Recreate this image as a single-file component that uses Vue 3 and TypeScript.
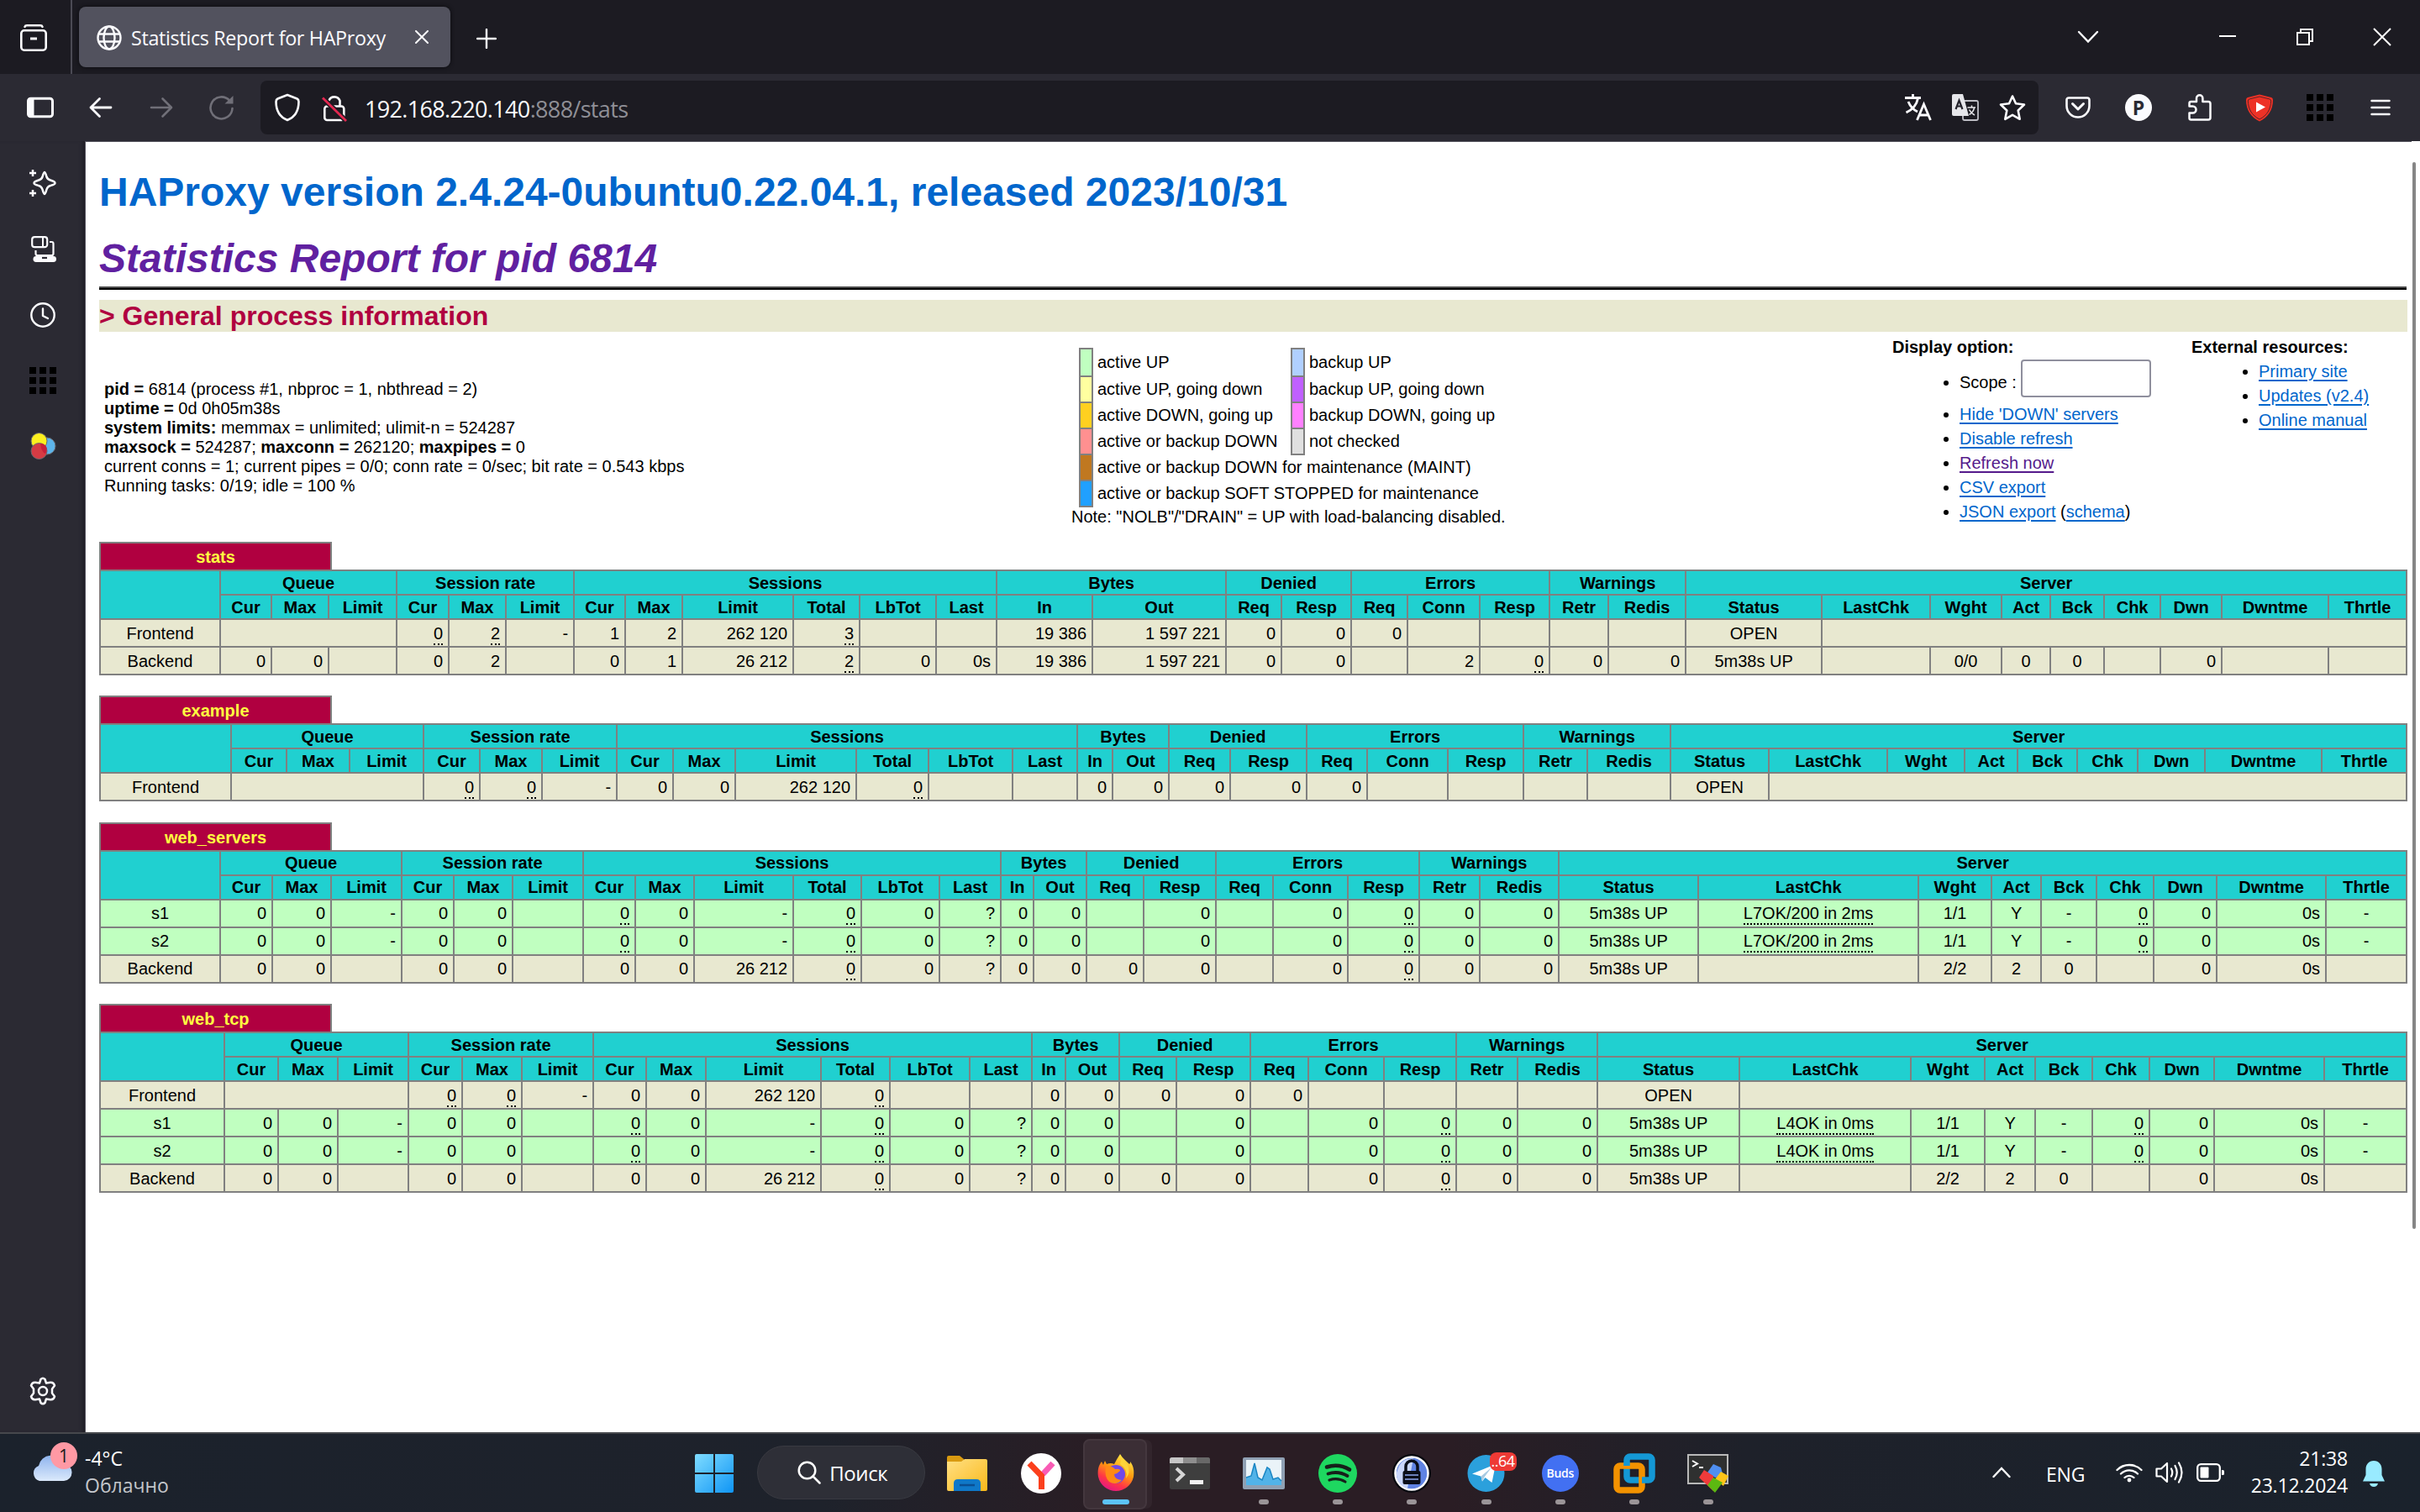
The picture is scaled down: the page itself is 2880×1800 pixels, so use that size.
<script setup lang="ts">
interface Cell {
  text: string
  span: number
  tip: boolean
  align: string
}
interface Row {
  kind: string
  cells: Cell[]
}
interface Proxy {
  name: string
  edges: number[]
  rows: Row[]
}

const groups: [string, number][] = [
  ['Queue', 3], ['Session rate', 3], ['Sessions', 6], ['Bytes', 2],
  ['Denied', 2], ['Errors', 3], ['Warnings', 2], ['Server', 9],
]
const heads = ('Cur|Max|Limit|Cur|Max|Limit|Cur|Max|Limit|Total|LbTot|Last|In|Out|Req|Resp|' +
  'Req|Conn|Resp|Retr|Redis|Status|LastChk|Wght|Act|Bck|Chk|Dwn|Dwntme|Thrtle').split('|')

// "~" marks a value with a tooltip, ":n" an empty cell over n columns
function row(kind: string, line: string): Row {
  let col = 0
  const cells = line.split('|').map((raw): Cell => {
    const span = raw.startsWith(':') ? Number(raw.slice(1)) : 1
    const centred = col === 0 || (col >= 22 && col <= 26) || col === 30
    col += span
    return {
      text: span > 1 ? '' : raw.replace('~', ''),
      span,
      tip: raw.startsWith('~'),
      align: centred ? 'ac' : 'ar',
    }
  })
  return { kind, cells }
}

const proxies: Proxy[] = [
  {
    name: 'stats',
    edges: [119, 262, 323, 391, 472, 534, 602, 683, 744, 812, 944, 1023, 1114, 1186, 1300, 1459, 1525, 1608, 1675, 1761, 1844, 1914, 2006, 2168, 2297, 2382, 2440, 2504, 2571, 2644, 2771, 2864],
    rows: [
      row('base', 'Frontend|:3|~0|~2|-|1|2|262 120|~3|||19 386|1 597 221|0|0|0|||||OPEN|:8'),
      row('base', 'Backend|0|0||0|2||0|1|26 212|~2|0|0s|19 386|1 597 221|0|0||2|~0|0|0|5m38s UP||0/0|0|0||0||'),
    ],
  },
  {
    name: 'example',
    edges: [119, 275, 341, 416, 504, 571, 645, 734, 801, 875, 1019, 1105, 1205, 1282, 1324, 1391, 1464, 1555, 1627, 1723, 1813, 1889, 1988, 2105, 2246, 2338, 2401, 2472, 2544, 2624, 2763, 2864],
    rows: [row('base', 'Frontend|:3|~0|~0|-|0|0|262 120|~0|||0|0|0|0|0|||||OPEN|:8')],
  },
  {
    name: 'web_servers',
    edges: [119, 262, 324, 394, 478, 540, 610, 694, 756, 826, 944, 1025, 1118, 1191, 1230, 1293, 1361, 1447, 1515, 1604, 1689, 1761, 1855, 2021, 2283, 2370, 2429, 2495, 2563, 2638, 2768, 2864],
    rows: [
      row('up', 's1|0|0|-|0|0||~0|0|-|~0|0|?|0|0||0||0|~0|0|0|5m38s UP|~L7OK/200 in 2ms|1/1|Y|-|~0|0|0s|-'),
      row('up', 's2|0|0|-|0|0||~0|0|-|~0|0|?|0|0||0||0|~0|0|0|5m38s UP|~L7OK/200 in 2ms|1/1|Y|-|~0|0|0s|-'),
      row('base', 'Backend|0|0||0|0||0|0|26 212|~0|0|?|0|0|0|0||0|~0|0|0|5m38s UP||2/2|2|0||0|0s|'),
    ],
  },
  {
    name: 'web_tcp',
    edges: [119, 267, 331, 402, 486, 550, 621, 706, 769, 840, 977, 1059, 1154, 1228, 1268, 1332, 1400, 1488, 1557, 1647, 1733, 1806, 1901, 2070, 2274, 2362, 2422, 2490, 2558, 2635, 2766, 2864],
    rows: [
      row('base', 'Frontend|:3|~0|~0|-|0|0|262 120|~0|||0|0|0|0|0|||||OPEN|:8'),
      row('up', 's1|0|0|-|0|0||~0|0|-|~0|0|?|0|0||0||0|~0|0|0|5m38s UP|~L4OK in 0ms|1/1|Y|-|~0|0|0s|-'),
      row('up', 's2|0|0|-|0|0||~0|0|-|~0|0|?|0|0||0||0|~0|0|0|5m38s UP|~L4OK in 0ms|1/1|Y|-|~0|0|0s|-'),
      row('base', 'Backend|0|0||0|0||0|0|26 212|~0|0|?|0|0|0|0||0|~0|0|0|5m38s UP||2/2|2|0||0|0s|'),
    ],
  },
]
const colWidths = (p: Proxy): number[] => p.edges.slice(1).map((e, i) => e - p.edges[i])

const legend = [
  ['#c0ffc0', 'active UP', '#b0d0ff', 'backup UP'],
  ['#ffffa0', 'active UP, going down', '#c060ff', 'backup UP, going down'],
  ['#ffd020', 'active DOWN, going up', '#ff80ff', 'backup DOWN, going up'],
  ['#ff9090', 'active or backup DOWN', '#e0e0e0', 'not checked'],
  ['#c07820', 'active or backup DOWN for maintenance (MAINT)'],
  ['#20a0ff', 'active or backup SOFT STOPPED for maintenance'],
]
const nine = [0, 1, 2, 3, 4, 5, 6, 7, 8]
</script>

<template>
  <div class="screen">
    <header class="tabs">
      <div class="view">
        <svg width="32" height="32" viewBox="0 0 32 32" fill="none" stroke="#fbfbfe" stroke-width="2.6">
          <path d="M5.5 2.8Q6 1.3 8 1.3H24Q26 1.3 26.500 2.8" stroke-linecap="round" /><rect x="1.300" y="7.300" width="29.400" height="23.400" rx="3.500" /><path d="M12 17H20" stroke-width="3" />
        </svg>
      </div>
      <div class="tab">
        <svg class="globe" width="30" height="30" viewBox="0 0 30 30" fill="none" stroke="#fbfbfe" stroke-width="2.4">
          <circle cx="15" cy="15" r="13.500" /><ellipse cx="15" cy="15" rx="6.500" ry="13.500" /><path d="M2 10.500H28M2 19.500H28" />
        </svg>
        <span class="tab-title">Statistics Report for HAProxy</span>
        <svg width="16" height="16" viewBox="0 0 16 16" stroke="#fbfbfe" stroke-width="2" stroke-linecap="round"><path d="M1 1L15 15M15 1L1 15" /></svg>
      </div>
      <svg class="plus" width="24" height="24" viewBox="0 0 24 24" stroke="#fbfbfe" stroke-width="2.400" stroke-linecap="round"><path d="M12 1V23M1 12H23" /></svg>
      <div class="winctl">
        <div class="chev"><svg width="26" height="16" viewBox="0 0 26 16" fill="none" stroke="#fbfbfe" stroke-width="2.400" stroke-linecap="round"><path d="M2 2L13 13.500L24 2" /></svg></div>
        <div><svg width="20" height="20" viewBox="0 0 20 20"><path d="M0 9H20" stroke="#fff" stroke-width="2" /></svg></div>
        <div><svg width="20" height="20" viewBox="0 0 20 20" fill="none" stroke="#fff" stroke-width="2"><path d="M1 5H15V19H1ZM5 5V1H19V15H15" /></svg></div>
        <div><svg width="22" height="22" viewBox="0 0 22 22" stroke="#fff" stroke-width="2"><path d="M1 1L21 21M21 1L1 21" /></svg></div>
      </div>
    </header>

    <nav class="toolbar">
      <div class="tool"><svg width="32" height="26" viewBox="0 0 32 26"><rect x="1.500" y="2.300" width="29" height="21.400" rx="3" fill="none" stroke="#fbfbfe" stroke-width="3" /><path d="M2 2H8.500V24H2Z" fill="#fbfbfe" /></svg></div>
      <div class="tool"><svg width="28" height="26" viewBox="0 0 28 26" fill="none" stroke="#fbfbfe" stroke-width="2.800" stroke-linecap="round" stroke-linejoin="round"><path d="M26 13H2M12.500 2.500L2 13L12.500 23.500" /></svg></div>
      <div class="tool"><svg width="28" height="26" viewBox="0 0 28 26" fill="none" stroke="#706f78" stroke-width="2.600" stroke-linecap="round" stroke-linejoin="round"><path d="M2 13H26M15.500 2.500L26 13L15.500 23.500" /></svg></div>
      <div class="tool"><svg width="30" height="30" viewBox="0 0 30 30" fill="none" stroke="#706f78" stroke-width="2.600" stroke-linecap="round"><path d="M27.500 16A13 13 0 1 1 24 6.500" /><path d="M28.500 1V10.500H18.500Z" fill="#706f78" stroke="none" /></svg></div>
      <div class="urlbar">
        <div class="uicon"><svg width="30" height="34" viewBox="0 0 30 34" fill="none" stroke="#fbfbfe" stroke-width="2.600" stroke-linejoin="round"><path d="M15 2L26.500 6.500Q28.500 7.500 28.500 10C28.500 20 25 28 15 32C5 28 1.500 20 1.500 10Q1.500 7.500 3.500 6.500Z" /></svg></div>
        <div class="uicon"><svg width="30" height="34" viewBox="0 0 30 34" fill="none" stroke="#fbfbfe" stroke-width="2.600"><rect x="3.300" y="15.500" width="23" height="16.500" rx="3" /><path d="M8.500 8.500A7 7 0 0 1 21.500 9V15" stroke-linecap="round" /><path d="M1 5.500L29 33" stroke="#1c1b22" stroke-width="6" /><path d="M1 5.500L29 33" stroke="#e22850" stroke-width="2.800" /></svg></div>
        <span class="url">192.168.220.140<i>:888/stats</i></span>
        <div class="uicon"><svg width="32" height="32" viewBox="0 0 32 32" fill="none" stroke="#fbfbfe" stroke-width="2.800"><path d="M0 4.500H19M9.500 0V4.500M15.500 5C14 13 8 19 1.500 22M4 9C6 14 11 19 15 21" /><path d="M14.500 31L22.500 12L30.500 31M17.500 25H27.500" /></svg></div>
        <div class="uicon"><svg width="32" height="32" viewBox="0 0 32 32"><rect x="13" y="8" width="18" height="23" rx="2" fill="none" stroke="#bdbdc4" stroke-width="1.800" /><path d="M2 0H13L20 26H2Q0 26 0 24V2Q0 0 2 0Z" fill="#e6e6ea" /><path d="M4.500 18L8.500 7.500L12.500 18M6 14.500H11" fill="none" stroke="#23222b" stroke-width="2.200" /><path d="M18.500 16H28M23.500 13.500V16M26.500 16C26 20 23 23 20.500 24.500M20.500 18.500C22 21.500 25 24 27 25" fill="none" stroke="#e6e6ea" stroke-width="1.600" /></svg></div>
        <div class="uicon"><svg width="32" height="32" viewBox="0 0 32 32" fill="none" stroke="#fbfbfe" stroke-width="2.600" stroke-linejoin="round"><path d="M16 2.500L20 11.300L30 12.500L22.700 19.500L24.700 29.800L16 24.800L7.300 29.800L9.300 19.500L2 12.500L12 11.300Z" /></svg></div>
      </div>
      <div class="tool first"><svg width="30" height="26" viewBox="0 0 30 26" fill="none" stroke="#fbfbfe" stroke-width="2.600" stroke-linecap="round" stroke-linejoin="round"><path d="M4 1.500H26Q28.500 1.500 28.500 4V11A13.500 13.500 0 0 1 1.500 11V4Q1.500 1.500 4 1.500Z" /><path d="M8.500 8.500L15 15L21.500 8.500" stroke-width="3" /></svg></div>
      <div class="tool"><div class="pbadge">P</div></div>
      <div class="tool"><svg class="puzzle" width="28" height="32" viewBox="0 0 28 32" fill="none" stroke="#fbfbfe" stroke-width="2.500" stroke-linejoin="round"><path d="M3.500 9H10V5A3.700 3.700 0 0 1 17.400 5V9H24Q26.500 9 26.500 11.500V28Q26.500 30.500 24 30.500H3.500Q1.500 30.500 1.500 28.500V22.500H5.500A4 4 0 0 0 5.500 14.500H1.500V11Q1.500 9 3.500 9Z" /></svg></div>
      <div class="tool"><svg width="34" height="33" viewBox="0 0 34 33"><path d="M17 .5L31 4Q33 4.500 33 7C33 19 27 28 17 32.500C7 28 1 19 1 7Q1 4.500 3 4Z" fill="#ed3226" /><path d="M17 3L28.500 5.800Q30.700 6.300 30.700 8C30.500 18 26 25.500 17 30C8 25.500 3.500 18 3.300 8Q3.300 6.300 5.500 5.800Z" fill="none" stroke="#5b2326" stroke-width="1" /><path d="M13 9.500L24 15.500L13 21.500Z" fill="#fff" /></svg></div>
      <div class="tool"><div class="nine"><i v-for="n in nine" :key="n" /></div></div>
      <div class="tool"><svg width="24" height="20" viewBox="0 0 24 20" stroke="#fbfbfe" stroke-width="2.500" stroke-linecap="round"><path d="M1.500 2H22.500M1.500 10H22.500M1.500 18H22.500" /></svg></div>
    </nav>

    <div class="body">
      <aside class="side">
        <div class="sicon"><svg width="32" height="32" viewBox="0 0 32 32" fill="none" stroke="#fbfbfe" stroke-width="2.500" stroke-linejoin="round"><path d="M18 3C19 3 19.500 5 20.500 8.500Q21.500 11.500 25 12.500C28.500 13.500 30.500 14.500 30.500 16C30.500 17.500 28.500 18 25 19Q21.500 20 20.500 23.500C19.500 27 19 29 18 29C17 29 16.500 27 15.500 23.500Q14.500 20 11 19C7.500 18 5.500 17.500 5.500 16C5.500 14.500 7.500 13.500 11 12.500Q14.500 11.500 15.500 8.500C16.500 5 17 3 18 3Z" /><path d="M4 0V8M0 4H8M4 24V32M0 28H8" /></svg></div>
        <div class="sicon"><svg width="32" height="32" viewBox="0 0 32 32" fill="none" stroke="#fbfbfe" stroke-width="2.200"><rect x="3.200" y="2.200" width="18" height="12" rx="3" /><path d="M16 3V13.500" stroke-width="2" /><path d="M24 8H26.500Q28.500 8 28.500 10V22Q28.500 24 26.500 24H9.500Q7.500 24 7.500 22V18" /><rect x="4.500" y="25" width="27.500" height="7" rx="3.400" fill="#fbfbfe" stroke="none" /><path d="M15 27H21" stroke="#2b2a33" /></svg></div>
        <div class="sicon"><svg width="30" height="30" viewBox="0 0 30 30" fill="none" stroke="#fbfbfe" stroke-width="2.400" stroke-linecap="round" stroke-linejoin="round"><circle cx="15" cy="15" r="13.700" /><path d="M15 7.500V16L21 19" /></svg></div>
        <div class="sicon"><div class="nine"><i v-for="n in nine" :key="n" /></div></div>
        <div class="sicon"><svg width="32" height="32" viewBox="0 0 32 32"><circle cx="21" cy="16" r="10" fill="#5db4ea" stroke="#6a6a70" /><circle cx="11.500" cy="10" r="9.500" fill="#fdf01f" stroke="#6a6a70" /><circle cx="11.500" cy="22" r="9.500" fill="#d63b44" stroke="#6a6a70" /><path d="M13 13Q19 13 20.500 18Q21 23 19 25Q14 23 13 13Z" fill="#c8203a" /></svg></div>
        <div class="gear"><svg width="32" height="34" viewBox="0 0 32 34" fill="none" stroke="#fbfbfe" stroke-width="2.500" stroke-linejoin="round"><circle cx="16" cy="17" r="5" /><path d="M13.500 3Q16 .5 18.500 3L20 7.500L25 6.800Q29 6.500 30 10.500L27 14.500V19.500L30 23.500Q29 27.500 25 27.200L20 26.500L18.500 31Q16 33.500 13.500 31L12 26.500L7 27.200Q3 27.500 2 23.500L5 19.500V14.500L2 10.500Q3 6.500 7 6.800L12 7.500Z" /></svg></div>
      </aside>

      <main class="page">
        <h1>HAProxy version 2.4.24-0ubuntu0.22.04.1, released 2023/10/31</h1>
        <h2>Statistics Report for pid 6814</h2>
        <div class="rule" />
        <h3>&gt; General process information</h3>
        <section class="info">
          <div class="proc">
            <div><b>pid = </b>6814 (process #1, nbproc = 1, nbthread = 2)</div>
            <div><b>uptime = </b>0d 0h05m38s</div>
            <div><b>system limits:</b> memmax = unlimited; ulimit-n = 524287</div>
            <div><b>maxsock = </b>524287; <b>maxconn = </b>262120; <b>maxpipes = </b>0</div>
            <div>current conns = 1; current pipes = 0/0; conn rate = 0/sec; bit rate = 0.543 kbps</div>
            <div>Running tasks: 0/19; idle = 100 %</div>
          </div>
          <div class="legend">
            <div v-for="(l, i) in legend" :key="i" class="lrow">
              <span class="sw" :style="{ background: l[0] }" />
              <span class="lt" :class="{ half: l.length > 2 }">{{ l[1] }}</span>
              <template v-if="l.length > 2">
                <span class="sw" :style="{ background: l[2] }" /><span class="lt">{{ l[3] }}</span>
              </template>
            </div>
            <div class="note">Note: "NOLB"/"DRAIN" = UP with load-balancing disabled.</div>
          </div>
          <div class="opts">
            <b>Display option:</b>
            <ul>
              <li class="scope"><span class="scope-label">Scope :</span> <span class="field" /></li>
              <li><a>Hide 'DOWN' servers</a></li>
              <li><a>Disable refresh</a></li>
              <li><a class="seen">Refresh now</a></li>
              <li><a>CSV export</a></li>
              <li><a>JSON export</a> (<a>schema</a>)</li>
            </ul>
          </div>
          <div class="res">
            <b>External resources:</b>
            <ul>
              <li><a>Primary site</a></li>
              <li><a>Updates (v2.4)</a></li>
              <li><a>Online manual</a></li>
            </ul>
          </div>
        </section>

        <section v-for="p in proxies" :key="p.name" class="proxy">
          <div class="pxname">{{ p.name }}</div>
          <table>
            <colgroup><col v-for="(w, i) in colWidths(p)" :key="i" :style="{ width: w + 'px' }"></colgroup>
            <tbody>
              <tr class="titre"><th rowspan="2" /><th v-for="g in groups" :key="g[0]" :colspan="g[1]">{{ g[0] }}</th></tr>
              <tr class="titre"><th v-for="(h, i) in heads" :key="i">{{ h }}</th></tr>
              <tr v-for="(r, ri) in p.rows" :key="ri" :class="r.kind">
                <td v-for="(c, ci) in r.cells" :key="ci" :colspan="c.span" :class="c.align"><u v-if="c.tip">{{ c.text }}</u><template v-else>{{ c.text }}</template></td>
              </tr>
            </tbody>
          </table>
        </section>
      </main>
      <div class="scroll" />
    </div>

    <footer class="taskbar">
      <div class="weather">
        <div class="cloud">
          <svg width="50" height="32" viewBox="0 0 50 32"><defs><linearGradient id="cl" x1="0" y1="0" x2="0" y2="1"><stop offset="0" stop-color="#8fb4ee" /><stop offset="1" stop-color="#dbe9fb" /></linearGradient></defs><path d="M10 31A9.500 9.500 0 0 1 9 13A15 15 0 0 1 38 11A10 10 0 0 1 39 31Z" fill="url(#cl)" /></svg>
          <span class="wbadge">1</span>
        </div>
        <div class="wtext"><div>-4°C</div><div class="dim">Облачно</div></div>
      </div>
      <div class="apps">
        <div class="app"><svg width="46" height="46" viewBox="0 0 46 46"><defs><linearGradient id="wn" x1="0" y1="0" x2="1" y2="1"><stop offset="0" stop-color="#7fdcff" /><stop offset="1" stop-color="#0f95f5" /></linearGradient></defs><path d="M2 0H22V22H0V2Q0 0 2 0ZM24 0H44Q46 0 46 2V22H24ZM0 24H22V46H2Q0 46 0 44ZM24 24H46V44Q46 46 44 46H24Z" fill="url(#wn)" /></svg></div>
        <div class="search"><svg width="28" height="28" viewBox="0 0 28 28" fill="none" stroke="#fff" stroke-width="2.500" stroke-linecap="round"><circle cx="11.500" cy="11.500" r="9.800" /><path d="M18.500 18.500L26.500 26.500" /></svg><span>Поиск</span></div>
        <div class="app"><svg width="48" height="44" viewBox="0 0 48 44"><defs><linearGradient id="fo" x1="0" y1="0" x2="1" y2="1"><stop offset="0" stop-color="#ffe084" /><stop offset="1" stop-color="#fbb91a" /></linearGradient></defs><path d="M0 10V3Q0 1 2 1H15L20 5V12Z" fill="#d99a10" /><path d="M0 8H17L21 5H46Q48 5 48 7V41Q48 43 46 43H2Q0 43 0 41Z" fill="url(#fo)" /><path d="M8 43V34Q8 29 13 29H35Q40 29 40 34V43Z" fill="#0f78c8" /><path d="M15 36H33" stroke="#0a4f92" stroke-width="2.500" /></svg></div>
        <div class="app"><svg width="48" height="48" viewBox="0 0 48 48"><circle cx="24" cy="24" r="24" fill="#fff" /><path d="M38 12L26 25" stroke="#f95bb5" stroke-width="7" /><path d="M10 12L24.500 27V43" fill="none" stroke="#fb3f1c" stroke-width="7" /></svg></div>
        <div class="app active">
          <svg width="46" height="46" viewBox="0 0 46 46"><defs><linearGradient id="ff" x1=".8" y1="0" x2=".3" y2="1"><stop offset="0" stop-color="#fff44f" /><stop offset=".45" stop-color="#ff980e" /><stop offset=".75" stop-color="#ff3647" /><stop offset="1" stop-color="#e31587" /></linearGradient></defs><path d="M28 0C31 5 35 8 38 11C40 13 40 11 40 9C44 14 45 20 44 27A21.500 21.500 0 0 1 2 27C1 20 2 14 6 9L8 13Q9 10 10 8L12 12Q17 10 21 12Q24 6 28 0Z" fill="url(#ff)" /><circle cx="23" cy="24" r="11" fill="#7048e8" /><path d="M11 15Q18 13 22 18Q28 17 28 20Q25 23 21 24Q21 30 30 31Q23 38 15 33Q9 27 11 15Z" fill="#ff8a16" /><path d="M28 12Q38 18 35 29Q41 22 37 13L30 4Z" fill="#ffd43a" /></svg>
          <i class="run on" />
        </div>
        <div class="app"><svg width="48" height="38" viewBox="0 0 48 38"><rect width="48" height="38" rx="2.500" fill="#3e3e3e" /><path d="M2.500 0H16V7H0V2.500Q0 0 2.500 0Z" fill="#c6c6c6" /><path d="M16 0H32V7H16Z" fill="#8e8e8e" /><path d="M32 0H45.500Q48 0 48 2.500V7H32Z" fill="#686868" /><path d="M8 13L16 20.500L8 28" fill="none" stroke="#d6d6d6" stroke-width="4" /><path d="M24 27H40V32H24Z" fill="#f1f1f1" /></svg></div>
        <div class="app"><svg width="50" height="38" viewBox="0 0 50 38"><rect width="50" height="38" rx="2" fill="#8fa0b3" /><rect x="4" y="3" width="42" height="30" fill="#eaf3f8" /><path d="M4 33V24L10 22L14 7L18 24L23 27L29 12L32 14L36 26L42 24L46 28V33Z" fill="#52b3e8" /><path d="M4 24L10 22L14 7L18 24L23 27L29 12L32 14L36 26L42 24L46 28" fill="none" stroke="#1a86c4" stroke-width="1.500" /></svg><i class="run" /></div>
        <div class="app"><svg width="46" height="46" viewBox="0 0 46 46" fill="none" stroke="#16201a" stroke-linecap="round"><circle cx="23" cy="23" r="23" fill="#1ed760" stroke="none" /><path d="M10 15.500Q24 11 37 18.500" stroke-width="4.600" /><path d="M11.500 23.500Q23.500 19.500 34.500 26" stroke-width="3.900" /><path d="M13 31Q23 27.500 32 33" stroke-width="3.200" /></svg><i class="run" /></div>
        <div class="app"><svg width="46" height="46" viewBox="0 0 46 46"><circle cx="23" cy="23" r="23" fill="#06080e" /><circle cx="23" cy="23" r="19.500" fill="#5f83e3" stroke="#fff" stroke-width="2.500" /><path d="M8 14Q14 4 25 5.500L18 41Q4 36 5 22Z" fill="#c9d6fa" /><path d="M16 21V15A7 7 0 0 1 30 15V21" fill="none" stroke="#0a0e1a" stroke-width="3.500" /><rect x="12.500" y="20" width="21" height="16" rx="2" fill="#0a0e1a" /><path d="M15 25H31M15 30H31" stroke="#8da7ee" stroke-width="1.600" /></svg><i class="run" /></div>
        <div class="app"><svg width="46" height="46" viewBox="0 0 46 46"><circle cx="22.500" cy="23" r="22" fill="#2ba0dc" /><path d="M6 23.500L34 12L29.500 34L21.500 28L18 32.500L16.500 26.500Z" fill="#fff" /><path d="M16.500 26.500L29 16L20.500 27.500L18 32.500Z" fill="#a9cbe2" /></svg><span class="tbadge">..64</span><i class="run" /></div>
        <div class="app"><div class="buds">Buds</div><i class="run" /></div>
        <div class="app"><svg width="50" height="48" viewBox="0 0 50 48" fill="none" stroke-width="7.500"><rect x="16" y="4" width="30" height="28" rx="4" stroke="#1498d5" /><rect x="4" y="15" width="30" height="29" rx="4" stroke="#f39200" /><path d="M16 11V15M34 32H38" stroke="#1498d5" /></svg><i class="run" /></div>
        <div class="app"><svg width="50" height="46" viewBox="0 0 50 46"><rect x="1" y="1" width="47" height="34" fill="#2f3030" stroke="#b9b9b9" stroke-width="2" /><path d="M6 8L12 11.500L6 15M14 16H19" fill="none" stroke="#fff" stroke-width="2" /><path d="M31 12L40 16L43 27L33 28L24 22Z" fill="#4f8ff0" /><path d="M20 19L31 26V44L14 28Z" fill="#ef3b3b" /><path d="M40 21L49 26L43 38L33 30Z" fill="#fcc419" /><path d="M31 28L42 34L33 46L24 37Z" fill="#5cb811" /></svg><i class="run" /></div>
      </div>
      <div class="tray">
        <svg class="up" width="22" height="14" viewBox="0 0 22 14" fill="none" stroke="#fff" stroke-width="2.400" stroke-linecap="round"><path d="M1.500 12L11 2L20.500 12" /></svg>
        <span class="lang">ENG</span>
        <svg class="wifi" width="32" height="24" viewBox="0 0 32 24" fill="none" stroke="#fff" stroke-width="2.300" stroke-linecap="round"><path d="M1.500 9A20.500 20.500 0 0 1 30.500 9M6 13.500A14 14 0 0 1 26 13.500M10.500 18A8 8 0 0 1 21.500 18" /><circle cx="16" cy="21" r="2.400" fill="#fff" stroke="none" /></svg>
        <svg class="vol" width="34" height="28" viewBox="0 0 34 28" fill="none" stroke="#fff" stroke-width="2.200" stroke-linecap="round" stroke-linejoin="round"><path d="M1.500 9.500H7L14 3V25L7 18.500H1.500ZM19 9.500Q21.500 14 19 18.500M23.500 6Q28 14 23.500 22M28 2.500Q35 14 28 25.500" /></svg>
        <svg class="bat" width="34" height="22" viewBox="0 0 34 22"><rect x="1.200" y="1.200" width="26.600" height="19.600" rx="4" fill="none" stroke="#fff" stroke-width="2.300" /><rect x="4.500" y="4.500" width="10" height="13" rx="1" fill="#fff" /><path d="M30 8H31.500Q33 8 33 9.500V12.500Q33 14 31.500 14H30Z" fill="#fff" /></svg>
        <div class="clock"><div>21:38</div><div>23.12.2024</div></div>
        <svg class="bell" width="26" height="32" viewBox="0 0 26 32" fill="#99ebff"><path d="M13 0C19 0 22.500 4.500 22.500 10V17L26 24.500H0L3.500 17V10C3.500 4.500 7 0 13 0ZM8 27H18Q17 31 13 31Q9 31 8 27Z" /></svg>
      </div>
    </footer>
  </div>
</template>

<style>
body { margin: 0; background: #fff; }
</style>

<style scoped>
* { box-sizing: border-box; }
svg { display: block; flex: none; }
.screen { width: 2880px; height: 1800px; overflow: hidden; display: flex; flex-direction: column; font-family: "Open Sans", "Noto Sans", sans-serif; color: #fbfbfe; }

.tabs { height: 88px; flex: none; display: flex; background: #1c1b22; }
.view { width: 86px; height: 88px; border-right: 2px solid #4b4a54; padding: 29px 0 0 24px; }
.tab { width: 442px; height: 72px; margin: 8px 0 0 8px; border-radius: 8px; background: #52525e; display: flex; align-items: center; padding-left: 21px; box-shadow: 0 0 5px #0a0a0d; }
.globe { margin-top: 2px; }
.tab-title { width: 338px; margin-left: 11px; font-size: 23.300px; letter-spacing: -0.320px; white-space: nowrap; padding-top: 2px; }
.plus { margin: 34px 0 0 31px; }
.winctl { margin-left: auto; margin-right: -1px; display: flex; height: 88px; }
.winctl > div { width: 92px; display: flex; align-items: center; justify-content: center; }
.winctl > .chev { width: 72px; margin-right: 84px; }

.toolbar { height: 80px; flex: none; display: flex; align-items: center; background: #2b2a33; padding: 0 11px 0 12px; }
.tool { width: 72px; height: 80px; flex: none; display: flex; align-items: center; justify-content: center; }
.first { margin-left: 11px; }
.puzzle { margin-left: 2px; }
.urlbar { flex: 1; height: 64px; margin-left: 10px; border-radius: 8px; background: #1c1b22; display: flex; align-items: center; padding: 0 3px 0 4px; }
.uicon { width: 56px; display: flex; justify-content: center; }
.url { flex: 1; margin-left: 8px; font-size: 27px; letter-spacing: -0.660px; padding-top: 3px; }
.url i { font-style: normal; color: #8f8f96; }
.pbadge { width: 32px; height: 32px; border-radius: 50%; background: #fbfbfe; color: #2b2a33; font-size: 23px; font-weight: 700; line-height: 32px; text-align: center; }
.nine { display: grid; grid-template-columns: 8px 8px 8px; gap: 4px; }
.nine i { width: 8px; height: 8px; background: #000; }

.body { height: 1537px; flex: none; display: flex; background: #fff; }
.side { width: 102px; background: #2b2a33; border-right: 1px solid #55545e; display: flex; flex-direction: column; align-items: center; padding: 11px 0 32px 1px; box-shadow: inset -5px 0 5px -3px #1c1b22; }
.sicon { height: 78.300px; display: flex; align-items: center; }
.gear { margin-top: auto; }
.page { width: 2768px; padding: 32px 6px 0 16px; border-top: 1px solid #55545e; font-family: "Liberation Sans", Arial, sans-serif; font-size: 20px; line-height: 23px; color: #000; }
.scroll { width: 4px; height: 1270px; margin: 25px 0 0 1px; border-radius: 2px; background: #858585; }
h1, h2, h3 { margin: 0; white-space: nowrap; }
h1 { font-size: 48px; line-height: 56px; color: #0066cc; }
h2 { margin-top: 23px; font-size: 48px; line-height: 56px; font-style: italic; color: #6020a0; }
.rule { height: 4px; margin-top: 5px; border-top: 2px solid #4a4a4a; background: #000; }
h3 { width: 2747px; height: 38px; margin-top: 12px; font-size: 32px; line-height: 38px; color: #b00040; background: #e8e8d0; }

.info { height: 250px; display: flex; }
.proc { width: 1157px; padding: 57px 0 0 6px; white-space: nowrap; }
.legend { width: 977px; padding-top: 19px; }
.lrow { height: 31px; margin-left: 9px; display: flex; align-items: center; }
.lrow:first-child { height: 33px; }
.sw { width: 17px; height: calc(100% + 2px); border: 2px solid #808080; margin-bottom: -2px; }
.lt { padding: 2px 0 0 5px; white-space: nowrap; }
.half { width: 235px; }
.note { white-space: nowrap; margin-top: 2px; }
.opts { width: 356px; padding-top: 7px; }
.res { padding-top: 7px; }
.info ul { margin: 0; padding-left: 80px; }
.info li { margin-top: 6px; line-height: 23px; white-space: nowrap; }
.info .scope { display: list-item; margin-top: 8px; line-height: 45px; height: 45px; margin-bottom: -2px; }
.scope .field { display: inline-block; vertical-align: middle; width: 155px; height: 45px; border: 2px solid #8f8f9d; border-radius: 4px; background: #fff; margin-top: -12px; }
a { color: #0066cc; text-decoration: underline; text-decoration-thickness: 1.500px; text-underline-offset: 3px; }
.seen { color: #551a8b; }

.proxy { margin-bottom: 24.400px; }
.pxname { width: 277px; height: 33px; border: 2px solid #808080; border-bottom: 0; background: #b00040; color: #ffff40; font-weight: 700; text-align: center; line-height: 33px; }
table { width: 2747px; table-layout: fixed; border-collapse: collapse; font-size: 20px; line-height: 23px; }
th, td { border: 2px solid #808080; padding: 1px 0 0; white-space: nowrap; height: 33px; }
.titre th { height: 29px; background: #20d0d0; text-align: center; }
.ar { text-align: right; padding-right: 6px; }
.ac { text-align: center; }
.base { background: #e8e8d0; }
.up td { background: #c0ffc0; }
u { text-decoration: none; border-bottom: 2px dotted #000; padding-bottom: 1px; }

.taskbar { height: 95px; flex: none; display: flex; border-top: 2px solid #46484c; background: linear-gradient(90deg, #1b222c 0, #1e222b 34%, #2a1d24 46%, #2a1d24 60%, #1e212a 72%, #1a222c 100%); font-size: 24px; color: #fff; }
.weather { width: 806px; display: flex; padding-left: 38px; }
.cloud { position: relative; padding-top: 25px; width: 63px; }
.cloud svg { margin-left: -1px; }
.wbadge { position: absolute; left: 22px; top: 10px; width: 32px; height: 32px; border-radius: 50%; background: #ff99a4; color: #1a1a1a; font-size: 21px; line-height: 32px; text-align: center; }
.wtext { padding-top: 13px; line-height: 32px; font-size: 23px; }
.dim { color: #c3c6ca; }
.apps { display: flex; }
.app { position: relative; width: 88.200px; display: flex; align-items: center; justify-content: center; }
.app svg { position: relative; z-index: 1; }
.active::before { content: ""; position: absolute; left: 5px; top: 6px; width: 72px; height: 80px; border-radius: 8px; background: #3b2e35; border: 2px solid #44373e; box-shadow: 7px 0 0 -1px #32252c; }
.run { position: absolute; left: 50%; top: 78px; width: 12px; height: 6px; margin-left: -6px; border-radius: 3px; background: #9b9598; }
.run.on { width: 32px; margin-left: -16px; background: #5cc3f8; }
.search { width: 200px; height: 64px; margin: 14px 6px 0 7px; border-radius: 32px; background: #2e2f37; border: 1px solid #393a41; display: flex; align-items: center; padding-left: 47px; font-size: 24px; }
.search span { margin-left: 10px; letter-spacing: -0.400px; padding-top: 1px; }
.tbadge { position: absolute; z-index: 2; left: 48px; top: 22px; height: 22px; padding: 0 2px; border-radius: 8px; background: #ee3a35; font-size: 18px; line-height: 21px; letter-spacing: -0.500px; }
.buds { width: 44px; height: 44px; border-radius: 50%; background: #4270f2; font-size: 14px; font-weight: 600; line-height: 43px; text-align: center; letter-spacing: -0.300px; }
.tray { margin-left: auto; display: flex; align-items: flex-start; padding-right: 42px; }
.up { margin-top: 39px; }
.lang { width: 47px; margin: 32px 36px 0 42px; font-size: 23px; line-height: 32px; letter-spacing: -0.200px; }
.wifi { margin-top: 34px; }
.vol { margin: 32px 15px 0 15px; }
.bat { margin-top: 35px; }
.clock { width: 146px; padding-top: 13px; font-size: 23px; line-height: 32px; text-align: right; letter-spacing: -0.200px; }
.bell { margin: 32px 0 0 18px; }
</style>
